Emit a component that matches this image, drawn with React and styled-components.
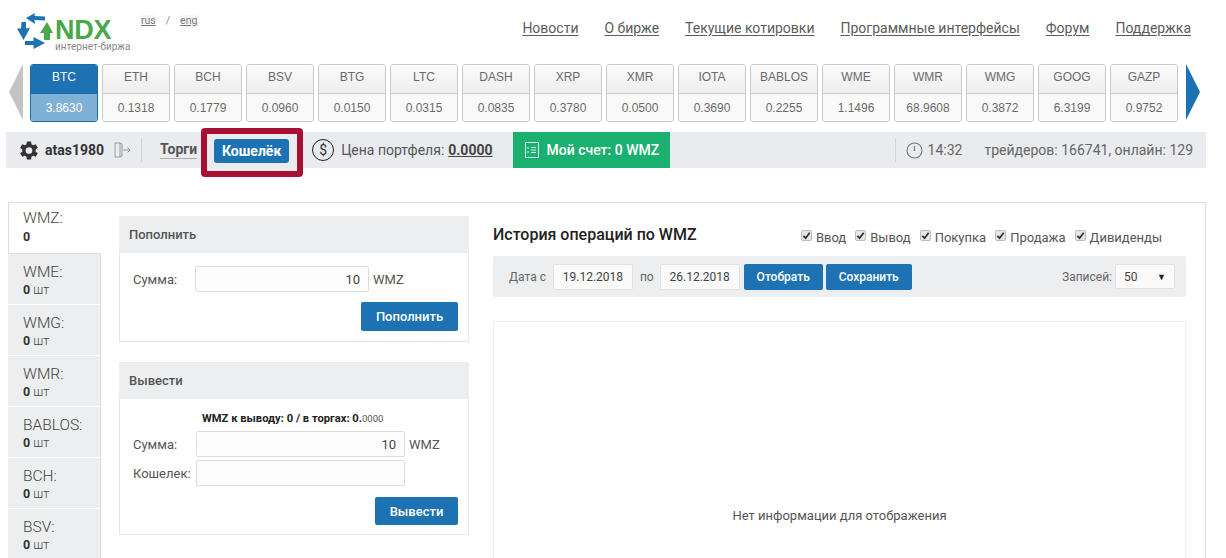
import React from "react";
import styled, { createGlobalStyle } from "styled-components";

const Global = createGlobalStyle`
  html, body { margin: 0; padding: 0; background: #fff; overflow: hidden; }
  body { font-family: Roboto, "Liberation Sans", sans-serif; color: #444; width: 1226px; height: 558px; }
  * { box-sizing: border-box; }
`;

const Page = styled.div`width: 1226px; height: 558px; overflow: hidden;`;

const Header = styled.header`
  height: 64px; display: flex; align-items: flex-start; padding-left: 17px;
`;
const Logo = styled.div`
  width: 123px; height: 52px; margin-top: 11px; display: flex; align-items: flex-start;
`;
const LogoText = styled.div`display: flex; flex-direction: column; margin-left: 1px;`;
const LogoName = styled.div`
  font: 700 27px/20px "Liberation Sans", Arial, sans-serif; color: #4aa84b; margin-top: 9px; letter-spacing: -0.3px;
`;
const LogoSub = styled.div`font: 400 10px/11px Roboto, sans-serif; color: #888; white-space: nowrap; margin-top: 1px;`;
const Lang = styled.div`
  display: flex; gap: 10px; margin-top: 15px; font-size: 10.5px; line-height: 12px; color: #888; margin-left: 1px;
  a { color: #777; text-decoration: underline; background: #f7f7f7; }
`;
const Nav = styled.nav`
  margin-left: auto; margin-right: 35px; margin-top: 20px; display: flex; gap: 26px; font-size: 14px; line-height: 17px;
  a { color: #5c5c5c; text-decoration: underline; text-underline-offset: 2px; }
`;

const Ticker = styled.div`display: flex; align-items: flex-start; padding-left: 9px; height: 68px;`;
const ArrowL = styled.div`
  width: 14px; height: 56px; margin-right: 7px;
  background: #c4c4c4; clip-path: polygon(100% 0, 100% 100%, 0 50%);
`;
const ArrowR = styled.div`
  width: 14px; height: 56px; margin-left: 8px;
  background: #1c72b2; clip-path: polygon(0 0, 100% 50%, 0 100%);
`;
const Cards = styled.div`display: flex; gap: 4px;`;
const Card = styled.div`
  width: 68px; height: 58px; border-radius: 3px; overflow: hidden; font: 400 12px "Liberation Sans", Arial, sans-serif;
  border: 1px solid ${p => (p.$on ? "#1a6ca8" : "#c9c9c9")};
  color: ${p => (p.$on ? "#fff" : "#6a6a6a")};
`;
const CardTop = styled.div`
  height: 29px; padding-bottom: 4px; display: flex; align-items: center; justify-content: center;
  background: ${p => (p.$on ? "#1c72b2" : "linear-gradient(#fbfbfb,#eeeeee)")};
  border-bottom: 1px solid ${p => (p.$on ? "#1a6ca8" : "#c9c9c9")};
`;
const CardBottom = styled.div`
  height: 27px; display: flex; align-items: center; justify-content: center;
  background: ${p => (p.$on ? "#7fb0d6" : "#fafafa")};
`;

const Toolbar = styled.div`
  margin-left: 6px; width: 1200px; height: 36px; background: #e9ebee;
  display: flex; align-items: center; font-size: 14px; color: #555;
`;
const Gear = styled.svg`width: 23px; height: 23px; margin-left: 11px; margin-right: 5px; fill: #333; flex: none;`;
const User = styled.b`font-weight: 700; color: #333; font-size: 14px;`;
const Exit = styled.svg`width: 18px; height: 18px; margin-left: 9px; fill: none; stroke: #999; stroke-width: 1; flex: none;`;
const VSep = styled.div`width: 1px; height: 24px; background: #d3d5d8; margin: ${p => p.$m};`;
const Trade = styled.span`
  font-weight: 700; font-size: 14px; color: #555; border-bottom: 1px solid #aaa; line-height: 17px; margin-right: 4px;
`;
const RedBox = styled.div`
  width: 102px; height: 49px; margin: -4px 0 -9px 0; border: 6px solid #a80f35; border-radius: 4px;
  display: flex; align-items: flex-start; padding: 5px 0 0 7px; background: #e9ebee; flex: none;
`;
const WalletBtn = styled.div`
  width: 75px; height: 24px; background: #1c72b2; color: #fff; border-radius: 3px;
  font-weight: 700; font-size: 14px; display: flex; align-items: center; justify-content: center;
`;
const Dollar = styled.div`
  width: 22px; height: 22px; border: 1.3px solid #222; border-radius: 50%; margin: 0 7px 0 9px;
  display: flex; align-items: center; justify-content: center; font-size: 14px; color: #333;
`;
const Price = styled.b`font-weight: 700; color: #444; text-decoration: underline; margin-left: 4px;`;
const Account = styled.div`
  margin-left: 20px; height: 36px; width: 157px; background: #1cb070; color: #fff;
  display: flex; align-items: center; padding-left: 11px; gap: 7px; font-size: 14px; font-weight: 500;
`;
const ToolRight = styled.div`margin-left: auto; display: flex; align-items: center; padding-right: 13px; color: #666;`;
const Clock = styled.svg`width: 17px; height: 17px; margin-right: 5px; fill: none; stroke: #777; stroke-width: 1.1;`;
const Traders = styled.span`margin-left: 22px;`;

const Main = styled.div`
  margin: 34px 0 0 8px; width: 1198px; height: 400px; border: 1px solid #ddd; border-bottom: 0; display: flex;
`;
const Side = styled.div`width: 93px; margin-left: -1px; flex: none; display: flex; flex-direction: column;`;
const Tab = styled.div`
  height: 51px; flex: none; padding: ${p => (p.$on ? "6px 0 0 14px" : "9px 0 0 15px")}; line-height: 18px; font-size: 15.5px; font-weight: 300; color: #444;
  background: ${p => (p.$on ? "#fff" : "#eceef0")};
  border-bottom: 1px solid ${p => (p.$on ? "#ddd" : "#fff")};
  border-left: ${p => (p.$on ? "1px solid #ddd" : "0")};
  border-right: ${p => (p.$on ? "0" : "1px solid #ddd")};
  b { display: block; font-size: 12.5px; line-height: 15px; font-weight: 700; color: #333; margin-top: ${p => (p.$on ? 2 : 1)}px; }
  small { font-weight: 300; font-size: 12.5px; color: #444; }
`;
const FormCol = styled.div`width: 350px; margin: 13px 0 0 18px; flex: none; display: flex; flex-direction: column; gap: 20px;`;
const Panel = styled.section`border: 1px solid #e7e7e7; height: ${p => p.$h}px;`;
const PanelHead = styled.div`
  height: 37px; margin: -1px -1px 0; background: #eceef0; padding: 0 10px;
  display: flex; align-items: center; font-size: 13px; font-weight: 500; color: #555;
`;
const Row = styled.div`
  display: flex; align-items: center; font-size: 13px; color: #555; margin-top: ${p => p.$mt || 0}px; padding-left: ${p => p.$pl}px;
`;
const Label = styled.span`width: ${p => p.$w}px; flex: none;`;
const Field = styled.div`
  width: ${p => p.$w}px; height: 26px; border: 1px solid #ddd; border-radius: 2px; background: #fdfdfd;
  display: flex; align-items: center; justify-content: flex-end; padding-right: 8px; font-size: 13px; color: #444; margin-right: 4px;
`;
const Unit = styled.span`font-size: 13px; color: #555;`;
const Right = styled.div`display: flex; justify-content: flex-end; padding-right: 10px; margin-top: ${p => p.$mt}px;`;
const Blue = styled.div`
  height: ${p => p.$h || 29}px; width: ${p => p.$w}px; margin-left: ${p => p.$ml || 0}px; background: #1c72b2; color: #fff; border-radius: 2px; font-size: ${p => p.$fs || 13}px; font-weight: 500;
  display: flex; align-items: center; justify-content: center; flex: none;
`;
const Note = styled.div`
  font-size: 11.2px; font-weight: 700; color: #222; text-align: left; padding-left: 82px; margin-top: 13px; height: 13px; line-height: 13px;
  span { font-weight: 400; font-size: 9.5px; color: #555; }
`;

const Hist = styled.div`width: 693px; margin-left: 24px; flex: none;`;
const HistHead = styled.div`height: 53px; display: flex; align-items: center; padding-top: 10px;`;
const Title = styled.h2`margin: 0; font-size: 16px; line-height: 20px; font-weight: 500; color: #222;`;
const Checks = styled.div`margin-left: auto; margin-right: 24px; margin-top: 6px; display: flex; gap: 9px; font-size: 13px; color: #555;`;
const Check = styled.label`display: flex; align-items: center; gap: 4px;`;
const Box = styled.span`
  width: 11px; height: 11px; margin-top: -5px; background: #e6e6e6; border: 1px solid #bbb; border-radius: 2px;
  display: flex; align-items: center; justify-content: center;
  svg { width: 9px; height: 9px; fill: none; stroke: #333; stroke-width: 2; }
`;
const Filter = styled.div`
  height: 41px; background: #eceef0; display: flex; align-items: center; padding: 0 11px 0 16px; font-size: 12px; color: #666; border-radius: 2px;
`;
const DateBox = styled.div`
  width: 80px; height: 26px; background: #fafafa; border: 1px solid #e2e2e2; border-radius: 2px;
  display: flex; align-items: center; justify-content: center; font-size: 12px; color: #444; margin: ${p => p.$m};
`;
const Select = styled.div`
  width: 60px; height: 25px; background: #fafafa; border: 1px solid #e2e2e2; border-radius: 2px; margin-left: 3px;
  display: flex; align-items: center; justify-content: space-between; padding: 0 8px 0 8px; color: #444;
  i { font-style: normal; font-size: 9px; color: #222; }
`;
const RecLabel = styled.span`margin-left: auto;`;
const Empty = styled.div`
  margin-top: 24px; height: 260px; border: 1px solid #eee; display: flex; justify-content: center;
  padding-top: 186px; font-size: 13px; color: #555;
`;

const tickers = [
  ["BTC","3.8630"],["ETH","0.1318"],["BCH","0.1779"],["BSV","0.0960"],["BTG","0.0150"],["LTC","0.0315"],
  ["DASH","0.0835"],["XRP","0.3780"],["XMR","0.0500"],["IOTA","0.3690"],["BABLOS","0.2255"],["WME","1.1496"],
  ["WMR","68.9608"],["WMG","0.3872"],["GOOG","6.3199"],["GAZP","0.9752"],
];
const tabs = ["WME","WMG","WMR","BABLOS","BCH","BSV"];

const LogoMark = () => (
  <svg width="37" height="40" viewBox="17 11 37 40" fill="#1c72b2" style={{ flex: "none" }}>
    <path d="M26 18 L35 13 L34.500 16 L45 16.500 V20.500 L34.500 20 L35 24 Z" />
    <path d="M23.500 40 L17 28.500 L21 28.500 L21.500 22 L26 22 L26 28.500 L30 28 Z" />
    <path d="M45 43 L33.500 37 V41 H25 V45 H33.500 V49 Z" />
    <path d="M47 22 L53 33 H50 V40 H44 V33 H40 Z" fill="#4aa84b" />
  </svg>
);

export default function App() {
  return (
    <Page>
      <Global />
      <Header>
        <Logo>
          <LogoMark />
          <LogoText>
            <LogoName>NDX</LogoName>
            <LogoSub>интернет-биржа</LogoSub>
          </LogoText>
        </Logo>
        <Lang><a>rus</a><span>/</span><a>eng</a></Lang>
        <Nav>
          <a>Новости</a><a>О бирже</a><a>Текущие котировки</a><a>Программные интерфейсы</a><a>Форум</a><a>Поддержка</a>
        </Nav>
      </Header>
      <Ticker>
        <ArrowL />
        <Cards>
          {tickers.map(([n, v], i) => (
            <Card key={n} $on={i === 0}>
              <CardTop $on={i === 0}>{n}</CardTop>
              <CardBottom $on={i === 0}>{v}</CardBottom>
            </Card>
          ))}
        </Cards>
        <ArrowR />
      </Ticker>
      <Toolbar>
        <Gear viewBox="0 0 24 24">
          <path fillRule="evenodd" d="M19.400 13a7.600 7.600 0 0 0 0-2l2.300-1.800-2.200-3.800-2.700 1.100a7.500 7.500 0 0 0-1.700-1L14.700 2.700h-4.400l-.4 2.800a7.500 7.500 0 0 0-1.700 1L5.500 5.400 3.300 9.200 5.600 11a7.600 7.600 0 0 0 0 2l-2.300 1.800 2.200 3.800 2.700-1.100a7.500 7.500 0 0 0 1.700 1l.4 2.800h4.400l.4-2.800a7.500 7.500 0 0 0 1.700-1l2.700 1.100 2.200-3.800zM12.500 15.500a3.500 3.500 0 1 1 0-7 3.500 3.500 0 0 1 0 7z" />
        </Gear>
        <User>atas1980</User>
        <Exit viewBox="0 0 18 18">
          <path d="M2 2h5l2 1v12l-2 1H2zM7 2v14M10 9h7M14.500 6.500 17 9l-2.500 2.500" />
        </Exit>
        <VSep $m="0 18px 0 10px" />
        <Trade>Торги</Trade>
        <RedBox><WalletBtn>Кошелёк</WalletBtn></RedBox>
        <Dollar>$</Dollar>
        <span>Цена портфеля:</span>
        <Price>0.0000</Price>
        <Account>
          <svg width="16" height="18" viewBox="0 0 16 18" fill="none" stroke="#d8f3e6" strokeWidth="1">
            <path d="M1.500 1.500h13v15h-13zM4 6v2M4 10v2M7 6.500h5M7 9h5M7 11.500h5" />
          </svg>
          Мой счет: 0 WMZ
        </Account>
        <ToolRight>
          <VSep $m="0 10px 0 0" />
          <Clock viewBox="0 0 17 17"><circle cx="8.500" cy="8.500" r="7.500" /><path d="M8.500 4v4.500h-1" /></Clock>
          <span>14:32</span>
          <Traders>трейдеров: 166741, онлайн: 129</Traders>
        </ToolRight>
      </Toolbar>
      <Main>
        <Side>
          <Tab $on>WMZ:<b>0</b></Tab>
          {tabs.map(t => (
            <Tab key={t}>{t}:<b>0 <small>шт</small></b></Tab>
          ))}
        </Side>
        <FormCol>
          <Panel $h={126}>
            <PanelHead>Пополнить</PanelHead>
            <Row $mt={13} $pl={13}>
              <Label $w={62}>Сумма:</Label>
              <Field $w={174}>10</Field>
              <Unit>WMZ</Unit>
            </Row>
            <Right $mt={10}><Blue $w={97}>Пополнить</Blue></Right>
          </Panel>
          <Panel $h={173}>
            <PanelHead>Вывести</PanelHead>
            <Note>WMZ к выводу: 0 / в торгах: 0.<span>0000</span></Note>
            <Row $mt={6} $pl={13}>
              <Label $w={63}>Сумма:</Label>
              <Field $w={209}>10</Field>
              <Unit>WMZ</Unit>
            </Row>
            <Row $mt={3} $pl={13}>
              <Label $w={63}>Кошелек:</Label>
              <Field $w={209} />
            </Row>
            <Right $mt={11}><Blue $w={83} $h={28}>Вывести</Blue></Right>
          </Panel>
        </FormCol>
        <Hist>
          <HistHead>
            <Title>История операций по WMZ</Title>
            <Checks>
              {["Ввод","Вывод","Покупка","Продажа","Дивиденды"].map(c => (
                <Check key={c}>
                  <Box><svg viewBox="0 0 10 10"><path d="M1.500 5.500 4 8l4.500-6" /></svg></Box>
                  {c}
                </Check>
              ))}
            </Checks>
          </HistHead>
          <Filter>
            <span>Дата с</span>
            <DateBox $m="0 7px 0 7px">19.12.2018</DateBox>
            <span>по</span>
            <DateBox $m="0 4px 0 6px">26.12.2018</DateBox>
            <Blue $w={79} $h={26} $fs={12}>Отобрать</Blue>
            <Blue $w={86} $h={26} $fs={12} $ml={3}>Сохранить</Blue>
            <RecLabel>Записей:</RecLabel>
            <Select>50<i>▼</i></Select>
          </Filter>
          <Empty>Нет информации для отображения</Empty>
        </Hist>
      </Main>
    </Page>
  );
}
